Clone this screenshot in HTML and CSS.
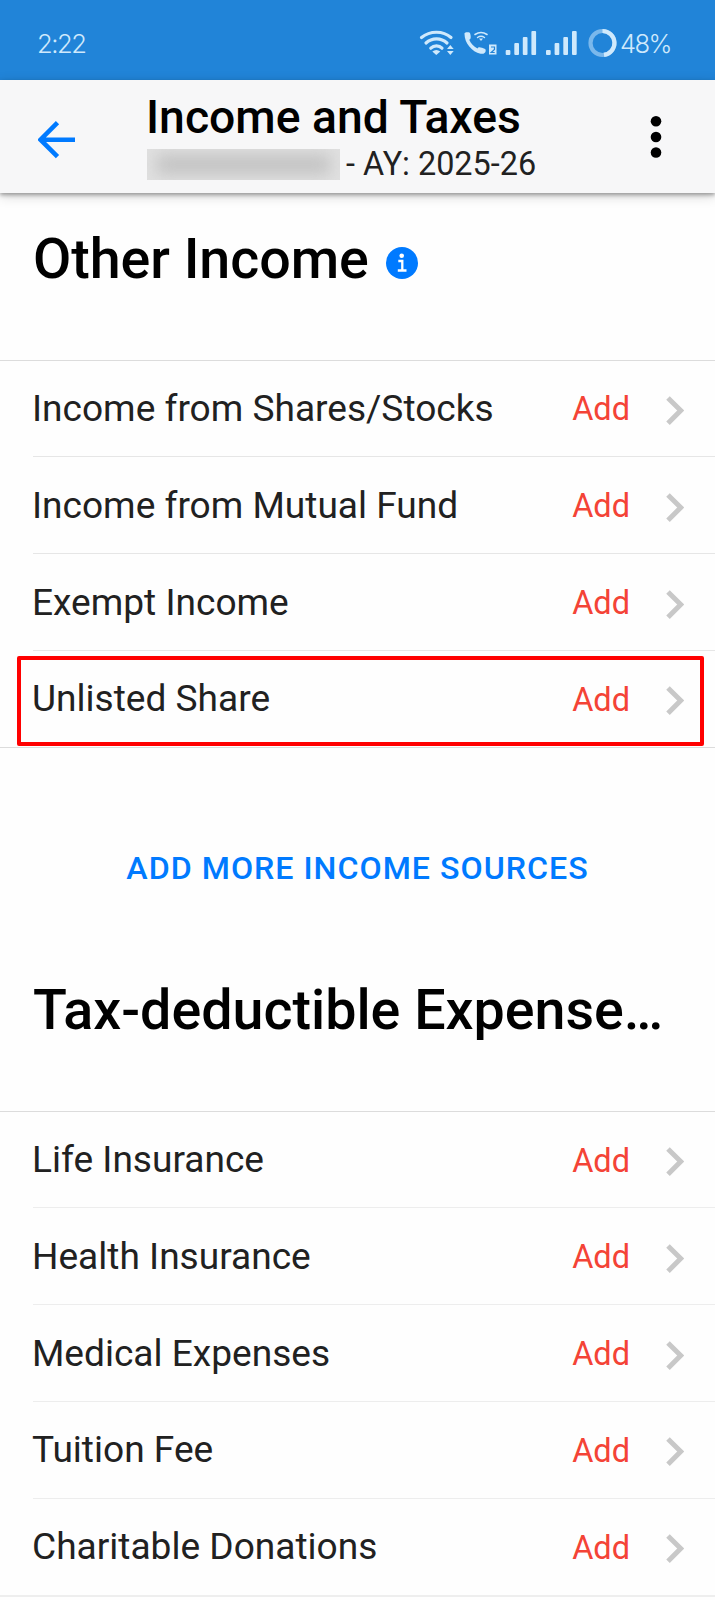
FILE: index.html
```
<!DOCTYPE html>
<html lang="en">
<head>
<meta charset="utf-8">
<title>Income and Taxes</title>
<link rel="stylesheet" href="styles.css">
</head>
<body>
<svg width="0" height="0" class="defs">
  <symbol id="chevron" viewBox="0 0 18 30"><path d="M2 2 L14.7 14.6 L2 27.2" fill="none" stroke="#c8c8c8" stroke-width="5"/></symbol>
</svg>
<div class="statusbar">
  <span class="time">2:22</span>
  <svg class="status-icons" width="202" height="32" viewBox="418 27 202 32">
    <g fill="none" stroke="#cfe9fc" stroke-linecap="round">
      <path d="M421.500 37.500 C430 30.500 443 30.500 451 37.500" stroke-width="3.200"/>
      <path d="M426 43 C432 37.500 441 37.500 447 43" stroke-width="3.200"/>
      <path d="M430.800 48.200 C434 45 439 45 442 48.200" stroke-width="3.200"/>
      <path d="M475 34.500 Q481 30.500 487 34.500" stroke-width="1.600"/>
      <path d="M477.500 37.500 Q481 35 484.500 37.500" stroke-width="1.400"/>
    </g>
    <g fill="#cfe9fc">
      <path d="M432.300 51.500 Q436.300 48.500 440.300 51.500 L436.300 55Z"/>
      <path d="M447 49 L450.300 45 L453.700 49Z M447 51 H453.700 L450.300 55Z"/>
      <path d="M479 38.500 H483 L481 41Z"/>
      <path d="M464.500 34 C464 32.500 466 32 468.500 32.200 C470 32.300 470.200 33 470.600 35.500 C471 38.500 470.500 39.200 469.200 39.800 C471 43.500 473.500 46.500 477.500 48.600 C478.300 47 479.300 47 482 47.800 C485 48.700 486 49.200 485.700 51 C485.300 53.300 483.500 54.200 480.500 53.700 C472 52 464.500 43 464.500 34Z"/>
      <rect x="489" y="44.500" width="7.500" height="10"/>
      <rect x="505.700" y="50" width="4.700" height="5" rx="1"/><rect x="514.300" y="43" width="4.700" height="12" rx="1"/><rect x="522.800" y="37" width="4.700" height="18" rx="1"/><rect x="531.400" y="31" width="4.700" height="24" rx="1"/>
      <rect x="546" y="50" width="4.700" height="5" rx="1"/><rect x="554.600" y="43" width="4.700" height="12" rx="1"/><rect x="563.300" y="37" width="4.700" height="18" rx="1"/><rect x="572" y="31" width="4.700" height="24" rx="1"/>
    </g>
    <path d="M491 47 H494.500 V49.500 L491.200 52.500 H494.700" fill="none" stroke="#2184d8" stroke-width="1.200"/>
    <circle cx="602.500" cy="43" r="12" fill="none" stroke="#7ab8ec" stroke-width="4.200"/>
    <path d="M602.500 31 A12 12 0 0 1 604 54.900" fill="none" stroke="#cfe9fc" stroke-width="4.200"/>
  </svg>
  <span class="battery">48%</span>
</div>
<header class="toolbar">
  <svg class="back" width="38" height="38" viewBox="0 0 38 38"><path d="M37 18.700 H3.500 M19.500 1.700 L2.500 18.700 L19.500 35.700" fill="none" stroke="#007aff" stroke-width="4.600"/></svg>
  <div class="titles">
    <h1 class="title">Income and Taxes</h1>
    <div class="subtitle"><span class="redacted"><span class="smudge"></span></span><span class="year">- AY: 2025-26</span></div>
  </div>
  <svg class="more" width="12" height="42" viewBox="0 0 12 42"><circle cx="6" cy="5.300" r="5.300"/><circle cx="6" cy="21" r="5.300"/><circle cx="6" cy="36.500" r="5.300"/></svg>
</header>
<main>
  <h2 class="heading heading-income"><span class="income-text">Other Income</span>
    <svg class="info" width="32" height="32" viewBox="0 0 32 32"><circle cx="16" cy="16" r="16" fill="#007aff"/><circle cx="15.700" cy="8.800" r="2.300" fill="#fff"/><path d="M12.300 14 H16.300 V23.200 M11.800 23.500 H20.500" fill="none" stroke="#fff" stroke-width="2.300"/></svg>
  </h2>
  <ul class="list">
    <li class="row"><span class="label">Income from Shares/Stocks</span><span class="add">Add</span><svg class="chev"><use href="#chevron"/></svg></li>
    <li class="row"><span class="label">Income from Mutual Fund</span><span class="add">Add</span><svg class="chev"><use href="#chevron"/></svg></li>
    <li class="row"><span class="label">Exempt Income</span><span class="add">Add</span><svg class="chev"><use href="#chevron"/></svg></li>
    <li class="row"><span class="label">Unlisted Share</span><span class="add">Add</span><svg class="chev"><use href="#chevron"/></svg><span class="highlight"></span></li>
  </ul>
  <button class="more-sources">ADD MORE INCOME SOURCES</button>
  <h2 class="heading heading-expenses">Tax-deductible Expense…</h2>
  <ul class="list list-expenses">
    <li class="row"><span class="label">Life Insurance</span><span class="add">Add</span><svg class="chev"><use href="#chevron"/></svg></li>
    <li class="row"><span class="label">Health Insurance</span><span class="add">Add</span><svg class="chev"><use href="#chevron"/></svg></li>
    <li class="row"><span class="label">Medical Expenses</span><span class="add">Add</span><svg class="chev"><use href="#chevron"/></svg></li>
    <li class="row"><span class="label">Tuition Fee</span><span class="add">Add</span><svg class="chev"><use href="#chevron"/></svg></li>
    <li class="row"><span class="label">Charitable Donations</span><span class="add">Add</span><svg class="chev"><use href="#chevron"/></svg></li>
  </ul>
</main>
</body>
</html>
```
FILE: styles.css
```
* { box-sizing: border-box; }
body { margin: 0; height: 1600px; overflow: hidden; background: #fefefe; color: #212121; font-family: Roboto, "Liberation Sans", sans-serif; }
h1, h2, ul { margin: 0; padding: 0; }
h1, h2 { font-weight: 500; }
.defs { display: block; }
.statusbar { height: 80px; display: flex; align-items: center; padding: 7px 43px 0 37px; background: #2184d8; color: #cfe9fc; font: 25.6px/30px Inter, sans-serif; }
.time { font-weight: 350; letter-spacing: -1.5px; }
.status-icons { margin: -1px 0 0 auto; }
.battery { width: 52px; font-weight: 350; letter-spacing: -1.6px; white-space: nowrap; }
.toolbar { position: relative; height: 113px; display: flex; align-items: flex-start; padding: 0 53px 0 38px; background: #f7f7f8; box-shadow: 0 2px 4px rgba(0,0,0,.34), 0 3px 12px rgba(0,0,0,.16); }
.back { margin-top: 41px; }
.titles { margin-left: 71px; flex: 1; }
.title { margin-top: 10px; margin-left: -1px; color: #000; font-size: 46.3px; line-height: 54px; white-space: nowrap; }
.subtitle { display: flex; align-items: center; height: 38px; font-size: 32.4px; line-height: 38px; white-space: nowrap; }
.redacted { width: 193px; height: 31px; margin-top: 2px; overflow: hidden; background: #e0e0e0; }
.smudge { display: block; height: 19px; margin: 6px 10px; background: #c2c2c2; filter: blur(8px); }
.year { margin: 2px 0 0 6px; }
.more { margin-top: 36px; }
.heading { color: #000; font-size: 55.6px; line-height: 66px; white-space: nowrap; padding-left: 33px; }
.heading-income { height: 166.6px; padding-top: 33px; display: flex; }
.income-text { letter-spacing: -0.05px; }
.info { margin: 21px 0 0 17px; }
.heading-expenses { height: 133.9px; margin-top: 43px; }
.list { list-style: none; border-top: 1px solid #dcdcdc; border-bottom: 1px solid #dcdcdc; }
.list-expenses { border-bottom: 2px solid #eee; }
.row { position: relative; display: flex; align-items: center; height: 96.8px; margin-left: 33px; padding-right: 30px; border-top: 1px solid #e6e6e6; font-size: 37.1px; line-height: 46px; }
.row:first-child { border-top: 0; height: 95.8px; }
.label { flex: 1; margin-top: 1px; margin-left: -1px; white-space: nowrap; }
.add { color: #f44336; font-size: 32.5px; line-height: 40px; margin-top: 2px; margin-right: 36px; }
.chev { width: 18px; height: 30px; margin-top: 5px; margin-right: 1px; }
.highlight { position: absolute; left: -16px; top: 5px; width: 687px; height: 90px; border: 4px solid #f00; border-radius: 2px; }
.list-expenses .row { border-top-color: #ededed; }
.more-sources { display: block; width: 100%; height: 131px; margin: 54px 0 44px; padding: 2px 0 0; border: 0; background: none; color: #007aff; font: 500 32.2px/38px Roboto, sans-serif; letter-spacing: 1px; }
```
